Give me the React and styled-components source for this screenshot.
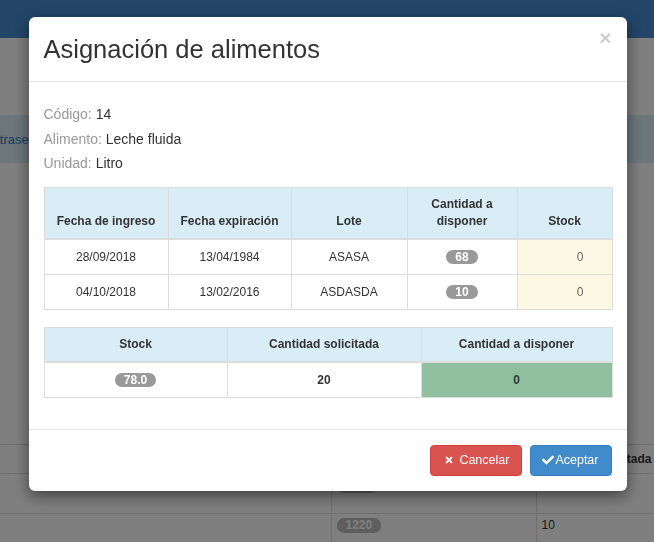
import React from 'react';
import styled, { createGlobalStyle } from 'styled-components';
import { FaTimes, FaCheck } from 'react-icons/fa';

const GlobalStyle = createGlobalStyle`
  html, body {
    margin: 0;
    padding: 0;
    background: #fff;
    font-family: "Liberation Sans", Arial, sans-serif;
    color: #333;
    overflow: hidden;
  }
  * {
    box-sizing: border-box;
  }
`;

const Page = styled.div`
  width: 654px;
  height: 542px;
  overflow: hidden;
  background: #fff;
`;

const Navbar = styled.div`
  height: 38px;
  background: #468bd0;
`;

const Band = styled.div`
  margin-top: 77px;
  height: 48px;
  display: flex;
  align-items: center;
  background: #d9edf7;
  font-size: 13px;
  a {
    margin-left: -24px;
    color: #337ab7;
    text-decoration: none;
  }
`;

const BackTable = styled.table`
  margin-top: 281px;
  width: 100%;
  border-collapse: collapse;
  table-layout: fixed;
  font-size: 12px;
  th,
  td {
    border-top: 1px solid #ddd;
    border-left: 1px solid #ddd;
    padding: 4px 5px 5px;
    text-align: left;
    white-space: nowrap;
    overflow: hidden;
    vertical-align: top;
  }
  th:first-child,
  td:first-child {
    border-left: none;
  }
  th {
    height: 29px;
    padding-top: 7px;
    font-weight: bold;
  }
  td {
    height: 40px;
  }
`;

const Col = styled.col`
  width: ${(p) => p.$w}px;
`;

const Backdrop = styled.div`
  position: fixed;
  inset: 0;
  background: rgba(0, 0, 0, 0.5);
`;

const Dialog = styled.div`
  position: fixed;
  inset: 0;
  display: flex;
  justify-content: center;
  align-items: flex-start;
  padding-top: 17px;
`;

const Modal = styled.div`
  width: 598px;
  margin-left: 1px;
  background: #fff;
  border-radius: 6px;
  box-shadow: 0 5px 15px rgba(0, 0, 0, 0.5);
`;

const Header = styled.div`
  display: flex;
  justify-content: space-between;
  align-items: flex-start;
  padding: 15px;
  border-bottom: 1px solid #e5e5e5;
`;

const Title = styled.h4`
  margin: 0;
  font-size: 25.5px;
  font-weight: normal;
  line-height: 34px;
  color: #333;
`;

const Close = styled.button`
  border: none;
  background: transparent;
  padding: 0;
  margin-top: -5px;
  margin-right: 0;
  font-family: "Liberation Sans", Arial, sans-serif;
  font-size: 21px;
  font-weight: bold;
  line-height: 1;
  color: #000;
  opacity: 0.2;
  cursor: pointer;
`;

const Body = styled.div`
  padding: 20px 15px 14px;
`;

const InfoLine = styled.div`
  font-size: 14px;
  line-height: 24.5px;
  color: #333;
  span {
    color: #999;
  }
`;

const Info = styled.div`
  margin-bottom: 11px;
`;

const DataTable = styled.table`
  width: 100%;
  border-collapse: collapse;
  table-layout: fixed;
  margin-bottom: 17px;
  font-size: 12px;
  color: #333;
  th,
  td {
    border: 1px solid #ddd;
    padding: 8px;
    text-align: center;
  }
  th {
    background: #d9edf7;
    font-weight: bold;
    line-height: 17px;
    vertical-align: bottom;
    border-bottom-width: 2px;
  }
  td {
    line-height: 18px;
    vertical-align: middle;
    font-weight: ${(p) => (p.$bold ? 'bold' : 'normal')};
  }
`;

const StockCell = styled.td`
  && {
    background: #fcf8e3;
    text-align: right;
    padding-right: 28px;
    color: #666;
  }
`;

const GreenCell = styled.td`
  && {
    background: #8fbf9f;
  }
`;

const Badge = styled.span`
  display: inline-block;
  min-width: 10px;
  height: 14px;
  padding: 0 9px;
  border-radius: 7px;
  background: #999;
  color: #fff;
  font-size: 12px;
  font-weight: bold;
  line-height: 14px;
  vertical-align: middle;
`;

const BackBadge = styled(Badge)`
  height: 15px;
  line-height: 15px;
  padding: 0 9px;
  background: #bdbdbd;
  color: #fff;
`;

const Footer = styled.div`
  display: flex;
  justify-content: flex-end;
  gap: 8px;
  padding: 15px;
  border-top: 1px solid #e5e5e5;
`;

const Button = styled.button`
  display: inline-flex;
  align-items: center;
  height: 31px;
  padding: ${(p) => (p.$variant === 'danger' ? '0 12px 0 13px' : '0 12px 0 11px')};
  border: 1px solid ${(p) => (p.$variant === 'danger' ? '#d43f3a' : '#357ebd')};
  border-radius: 4px;
  background: ${(p) => (p.$variant === 'danger' ? '#d9534f' : '#428bca')};
  color: #fff;
  font-family: "Liberation Sans", Arial, sans-serif;
  font-size: 12.5px;
  cursor: pointer;
  svg {
    font-size: ${(p) => (p.$variant === 'danger' ? '10px' : '12px')};
    margin-right: ${(p) => (p.$variant === 'danger' ? '5px' : '1px')};
  }
`;

const lotes = [
  { ingreso: '28/09/2018', expiracion: '13/04/1984', lote: 'ASASA', cantidad: 68, stock: 0 },
  { ingreso: '04/10/2018', expiracion: '13/02/2016', lote: 'ASDASDA', cantidad: 10, stock: 0 },
];

export default function App() {
  return (
    <>
      <GlobalStyle />
      <Page>
        <Navbar />
        <Band>
          <a href="#">Contraseña</a>
        </Band>
        <BackTable>
          <colgroup>
            <Col $w={331} />
            <Col $w={205} />
            <Col />
          </colgroup>
          <thead>
            <tr>
              <th></th>
              <th>Stock</th>
              <th>Cantidad solicitada</th>
            </tr>
          </thead>
          <tbody>
            <tr>
              <td></td>
              <td>
                <BackBadge>78.0</BackBadge>
              </td>
              <td>20</td>
            </tr>
            <tr>
              <td></td>
              <td>
                <BackBadge>1220</BackBadge>
              </td>
              <td>10</td>
            </tr>
          </tbody>
        </BackTable>
      </Page>
      <Backdrop />
      <Dialog>
        <Modal>
          <Header>
            <Title>Asignación de alimentos</Title>
            <Close>×</Close>
          </Header>
          <Body>
            <Info>
              <InfoLine>
                <span>Código:</span> 14
              </InfoLine>
              <InfoLine>
                <span>Alimento:</span> Leche fluida
              </InfoLine>
              <InfoLine>
                <span>Unidad:</span> Litro
              </InfoLine>
            </Info>
            <DataTable>
              <colgroup>
                <Col $w={124} />
                <Col $w={123} />
                <Col $w={116} />
                <Col $w={110} />
                <Col $w={95} />
              </colgroup>
              <thead>
                <tr>
                  <th>Fecha de ingreso</th>
                  <th>Fecha expiración</th>
                  <th>Lote</th>
                  <th>Cantidad a disponer</th>
                  <th>Stock</th>
                </tr>
              </thead>
              <tbody>
                {lotes.map((l) => (
                  <tr key={l.lote}>
                    <td>{l.ingreso}</td>
                    <td>{l.expiracion}</td>
                    <td>{l.lote}</td>
                    <td>
                      <Badge>{l.cantidad}</Badge>
                    </td>
                    <StockCell>{l.stock}</StockCell>
                  </tr>
                ))}
              </tbody>
            </DataTable>
            <DataTable $bold>
              <colgroup>
                <Col $w={183} />
                <Col $w={194} />
                <Col $w={191} />
              </colgroup>
              <thead>
                <tr>
                  <th>Stock</th>
                  <th>Cantidad solicitada</th>
                  <th>Cantidad a disponer</th>
                </tr>
              </thead>
              <tbody>
                <tr>
                  <td>
                    <Badge>78.0</Badge>
                  </td>
                  <td>20</td>
                  <GreenCell>0</GreenCell>
                </tr>
              </tbody>
            </DataTable>
          </Body>
          <Footer>
            <Button $variant="danger">
              <FaTimes />
              Cancelar
            </Button>
            <Button $variant="primary">
              <FaCheck />
              Aceptar
            </Button>
          </Footer>
        </Modal>
      </Dialog>
    </>
  );
}
